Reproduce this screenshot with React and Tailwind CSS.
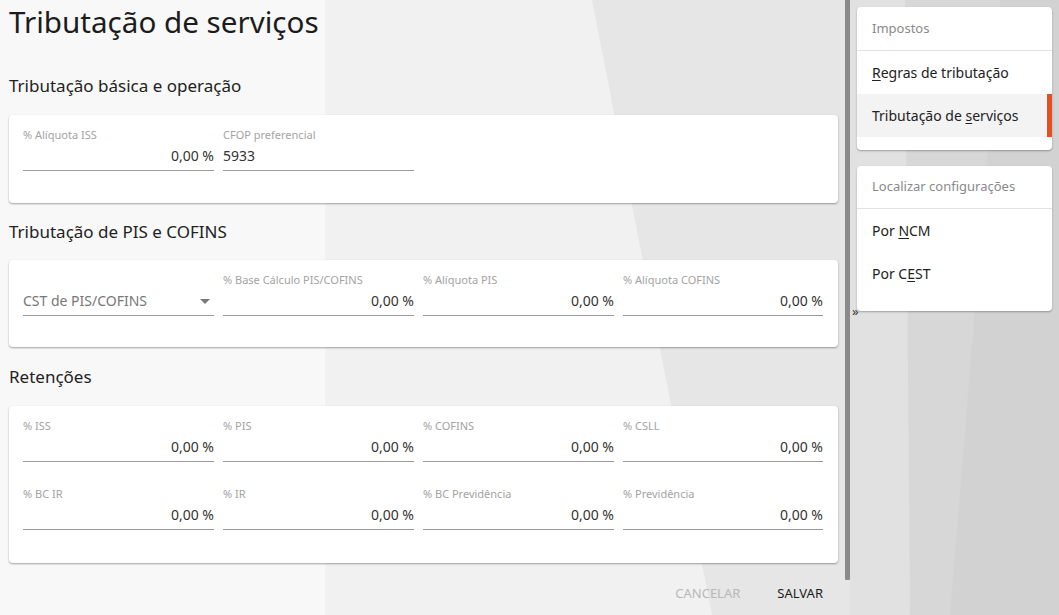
import React from 'react';

const font = { fontFamily: '"Noto Sans", "Open Sans", sans-serif' };

function Field({ label, value, last, align = 'right' }) {
  return (
    <div className={`w-[200px] ${last ? '' : 'pr-[9px]'}`}>
      <div className="text-[11px] leading-[12px] text-[#a3a3a3] whitespace-nowrap">{label}</div>
      <div
        className={`pt-[6px] pb-[5px] border-b border-[#9a9a9a] text-[14px] leading-[18px] text-[#333] ${
          align === 'right' ? 'text-right' : 'text-left'
        }`}
      >
        {value}
      </div>
    </div>
  );
}

function SelectField({ label }) {
  return (
    <div className="w-[200px] pr-[9px]">
      <div className="h-[12px]" />
      <div className="pt-[6px] pb-[5px] border-b border-[#9a9a9a] flex items-center justify-between text-[14px] leading-[18px] text-[#777]">
        <span>{label}</span>
        <svg width="10" height="5" viewBox="0 0 10 5" className="mr-[4px]">
          <path d="M0 0 L10 0 L5 5 Z" fill="#7a7a7a" />
        </svg>
      </div>
    </div>
  );
}

function Card({ children, className = '' }) {
  return (
    <div className={`bg-white rounded-[4px] shadow-[0_1px_2px_rgba(0,0,0,0.35)] pl-[14px] pr-[15px] pt-[14px] ${className}`}>
      {children}
    </div>
  );
}

function SideItem({ children, active }) {
  return (
    <div className={`relative h-[43px] flex items-center pl-[15px] text-[14px] text-[#222] ${active ? 'bg-[#f3f3f3]' : ''}`}>
      {children}
      {active && <div className="absolute right-0 top-0 bottom-0 w-[5px] bg-[#e4501f]" />}
    </div>
  );
}

export default function App() {
  return (
    <div className="relative w-[1059px] h-[615px] overflow-hidden" style={font}>
      {/* background art */}
      <svg className="absolute inset-0" width="1059" height="615" viewBox="0 0 1059 615">
        <rect width="1059" height="615" fill="#e6e6e6" />
        <polygon points="0,0 325,0 325,615 0,615" fill="#f8f8f8" />
        <polygon points="325,0 592,0 712,615 325,615" fill="#f1f1f1" />
        <polygon points="850,0 1059,0 1059,615 850,615" fill="#d7d7d7" />
        <polygon points="850,0 905,0 910,615 850,615" fill="#e1e1e1" />
        <polygon points="950,615 1059,615 1059,0 1000,0" fill="#d2d2d2" />
      </svg>

      <div className="relative flex h-full">
        {/* main */}
        <div className="w-[845px] pl-[9px] pr-[7px]">
          <h1 className="mt-[4px] text-[29.6px] leading-[36px] text-[#1c1c1c]">Tributação de serviços</h1>

          <h2 className="mt-[34px] text-[17px] leading-[24px] text-[#222]">Tributação básica e operação</h2>
          <Card className="mt-[17px] pb-[32px]">
            <div className="flex">
              <Field label="% Alíquota ISS" value="0,00 %" />
              <Field label="CFOP preferencial" value="5933" align="left" />
            </div>
          </Card>

          <h2 className="mt-[17px] text-[17px] leading-[24px] text-[#222]">Tributação de PIS e COFINS</h2>
          <Card className="mt-[16px] pb-[31px]">
            <div className="flex">
              <SelectField label="CST de PIS/COFINS" />
              <Field label="% Base Cálculo PIS/COFINS" value="0,00 %" />
              <Field label="% Alíquota PIS" value="0,00 %" />
              <Field label="% Alíquota COFINS" value="0,00 %" last />
            </div>
          </Card>

          <h2 className="mt-[18px] text-[17px] leading-[24px] text-[#222]">Retenções</h2>
          <Card className="mt-[17px] pb-[33px]">
            <div className="flex">
              <Field label="% ISS" value="0,00 %" />
              <Field label="% PIS" value="0,00 %" />
              <Field label="% COFINS" value="0,00 %" />
              <Field label="% CSLL" value="0,00 %" last />
            </div>
            <div className="flex mt-[26px]">
              <Field label="% BC IR" value="0,00 %" />
              <Field label="% IR" value="0,00 %" />
              <Field label="% BC Previdência" value="0,00 %" />
              <Field label="% Previdência" value="0,00 %" last />
            </div>
          </Card>

          <div className="mt-[12px] flex justify-end gap-[37px] pr-[15px] text-[13px] leading-[36px]">
            <span className="text-[#b8b8b8]">CANCELAR</span>
            <span className="text-[#1c1c1c]">SALVAR</span>
          </div>
        </div>

        {/* scrollbar */}
        <div className="w-[5px] h-[580px] bg-[#8a8a8a] rounded-b-[1px]" />

        {/* collapse strip */}
        <div className="w-[7px] pt-[303px] pl-[2px] text-[13px] leading-[16px] text-[#333]">»</div>

        {/* sidebar */}
        <div className="w-[195px] pt-[7px] flex flex-col gap-[16px]">
          <div className="bg-white rounded-[4px] shadow-[0_1px_2px_rgba(0,0,0,0.3)] pb-[13px]">
            <div className="h-[44px] flex items-center pl-[15px] text-[13px] text-[#8a8a8a] border-b border-[#e2e2e2]">Impostos</div>
            <SideItem>
              <span><span className="underline underline-offset-2">R</span>egras de tributação</span>
            </SideItem>
            <SideItem active>
              <span>Tributação de <span className="underline underline-offset-2">s</span>erviços</span>
            </SideItem>
          </div>
          <div className="bg-white rounded-[4px] shadow-[0_1px_2px_rgba(0,0,0,0.3)] pb-[16px]">
            <div className="h-[43px] flex items-center pl-[15px] text-[13px] text-[#8a8a8a] border-b border-[#e2e2e2]">Localizar configurações</div>
            <SideItem>
              <span>Por <span className="underline underline-offset-2">N</span>CM</span>
            </SideItem>
            <SideItem>
              <span>Por C<span className="underline underline-offset-2">E</span>ST</span>
            </SideItem>
          </div>
        </div>
      </div>
    </div>
  );
}
